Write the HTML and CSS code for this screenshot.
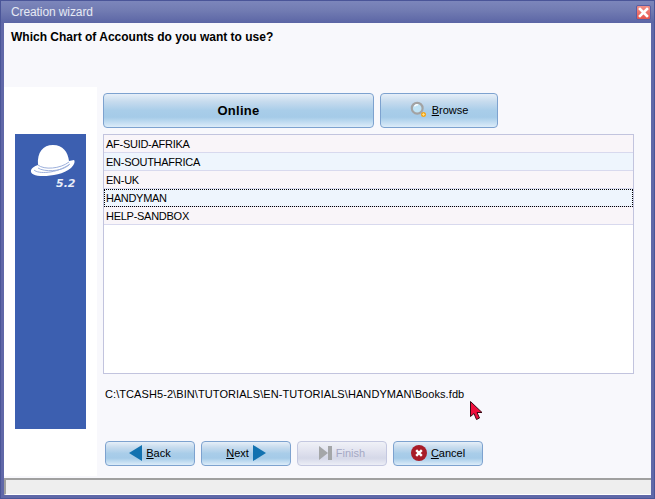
FILE: index.html
```html
<!DOCTYPE html>
<html lang="en">
<head>
<meta charset="utf-8">
<title>Creation wizard</title>
<link rel="stylesheet" href="styles.css">
</head>
<body>
<div class="window">
  <div class="titlebar">
    <span class="title">Creation wizard</span>
    <span class="close"><svg width="11" height="11" viewBox="0 0 11 11"><path d="M2 2l7 7M9 2l-7 7" stroke="#fff" stroke-width="2.6" stroke-linecap="square"/></svg></span>
  </div>
  <div class="client">
    <header class="question">Which Chart of Accounts do you want to use?</header>
    <div class="middle">
      <aside class="side">
        <div class="brand">
          <svg class="hat" width="46" height="36" viewBox="0 0 46 36">
            <path d="M8 21C7 8 13 1 23 1c10 0 15 7 16 16l5-1c1 1 1 4-3 8C34 30 22 32 13 32 5 32 0 30 1 26c1-2 3-4 7-5z" fill="#fff"/>
            <path d="M8 21c6 5 22 4 31-3M8 24c6 4 23 4 31-3M4 26c4 4 22 4 36-6" fill="none" stroke="#9db0dc" stroke-width="1"/>
          </svg>
          <span class="version">5.2</span>
        </div>
      </aside>
      <main class="content">
        <div class="top-actions">
          <button class="btn online">Online</button>
          <button class="btn browse">
            <svg width="18" height="18" viewBox="0 0 20 20"><circle cx="8" cy="8" r="6" fill="#bfe3f5" stroke="#a3a3a3" stroke-width="2.4"/><path d="M5 6c1-1.500 3-2 4-1.500" stroke="#fff" stroke-width="1.400" fill="none"/><circle cx="15" cy="15" r="2.800" fill="#f3a51d"/><path d="M15 13.500v3M13.500 15h3" stroke="#ffe58a" stroke-width="1"/></svg>
            <span><u>B</u>rowse</span>
          </button>
        </div>
        <div class="list">
          <div class="row odd">AF-SUID-AFRIKA</div>
          <div class="row even">EN-SOUTHAFRICA</div>
          <div class="row odd">EN-UK</div>
          <div class="row even focus">HANDYMAN</div>
          <div class="row odd">HELP-SANDBOX</div>
        </div>
        <div class="path">C:\TCASH5-2\BIN\TUTORIALS\EN-TUTORIALS\HANDYMAN\Books.fdb</div>
        <div class="nav">
          <button class="btn nav-btn">
            <svg width="13" height="16" viewBox="0 0 13 16"><path d="M13 0v16L0 8z" fill="#1272b0"/></svg>
            <span><u>B</u>ack</span>
          </button>
          <button class="btn nav-btn">
            <span><u>N</u>ext</span>
            <svg width="13" height="16" viewBox="0 0 13 16"><path d="M0 0v16l13-8z" fill="#1272b0"/></svg>
          </button>
          <button class="btn nav-btn disabled">
            <svg width="13" height="16" viewBox="0 0 13 16"><path d="M0 1l9 7-9 7z" fill="#a4a6a8"/><path d="M9 1h4v14H9z" fill="#a4a6a8"/></svg>
            <span>Finish</span>
          </button>
          <button class="btn nav-btn">
            <svg width="16" height="16" viewBox="0 0 16 16"><circle cx="8" cy="8" r="8" fill="#a81c28"/><path d="M5.200 5.200l5.600 5.600M10.800 5.200l-5.600 5.600" stroke="#fff" stroke-width="2.400"/></svg>
            <span><u>C</u>ancel</span>
          </button>
        </div>
      </main>
    </div>
    <footer class="status"></footer>
  </div>
  <svg class="cursor" width="14" height="19" viewBox="0 0 14 19"><path d="M.5.500v15l3.500-3 2.500 6 3-1.500-2.500-5.500h5z" fill="#ee0f3c" stroke="#3a0a14" stroke-width="1"/></svg>
</div>
</body>
</html>
```
FILE: styles.css
```css
* { box-sizing: border-box; }
html, body { margin: 0; padding: 0; }
body { width: 655px; height: 499px; overflow: hidden; font-family: "Liberation Sans", Arial, sans-serif; font-size: 11px; color: #000; }
.window { position: relative; width: 655px; height: 499px; padding: 0 3px 3px; display: flex; flex-direction: column; background: #6068a8; border: 1px solid #4a5598; }
.titlebar { height: 22px; flex: none; margin: 0 -3px; padding: 0 3px 0 10px; display: flex; align-items: center; justify-content: space-between; background: linear-gradient(#7c86bb, #717bb2 45%, #5b65a5); }
.title { color: #e6e9f4; font-size: 12px; letter-spacing: -0.1px; }
.close { width: 15px; height: 15px; display: flex; align-items: center; justify-content: center; border: 1px solid #5a5ea0; border-radius: 2px; background: linear-gradient(#f09088, #e5544e); }
.client { flex: 1; display: flex; flex-direction: column; min-height: 0; background: #f8f8fc; }
.question { height: 64px; flex: none; padding: 7px 0 0 7px; font-size: 12px; font-weight: bold; line-height: 14px; }
.middle { flex: 1; display: flex; min-height: 0; }
.side { width: 93px; flex: none; padding: 47px 0 47px 11px; background: #fff; }
.brand { position: relative; width: 71px; height: 295px; background: #3c5fb0; }
.hat { position: absolute; left: 15px; top: 10px; }
.version { position: absolute; left: 41px; top: 43px; color: #e8edf8; font-family: "DejaVu Sans", sans-serif; font-size: 11px; font-weight: bold; font-style: italic; }
.content { flex: 1; padding: 6px 17px 0 6px; display: flex; flex-direction: column; }
.top-actions { display: flex; gap: 6px; height: 35px; flex: none; }
.btn { display: flex; align-items: center; justify-content: center; gap: 4px; padding: 0 0 1px; border: 1px solid #7da2cf; border-radius: 4px; font-family: "Liberation Sans", sans-serif; font-size: 11px; color: #000; background: linear-gradient(#e6eff8 0%, #c8dcee 22%, #a9cde9 50%, #a5cbe8 70%, #dcecf9 100%); }
.online { width: 271px; font-size: 13px; font-weight: bold; letter-spacing: 0.3px; }
.browse { width: 118px; }
.list { margin-top: 6px; height: 240px; flex: none; background: #fff; border: 1px solid #c2c4de; letter-spacing: -0.27px; }
.row { height: 18px; padding: 1px 0 0 2px; line-height: 17px; border-bottom: 1px solid #d8d9ee; }
.odd { background: #f9f5f9; }
.even { background: #eef5fd; }
.focus { outline: 1px dotted #000; outline-offset: -1px; }
.path { margin: 13px 0 0 2px; height: 15px; line-height: 15px; flex: none; letter-spacing: 0.08px; }
.nav { margin: 39px 0 0 2px; display: flex; gap: 6px; }
.nav-btn { width: 90px; height: 25px; }
.disabled { color: #a4a8c4; border-color: #c4c8e0; background: linear-gradient(#f0f1f7, #dfe1ee 45%, #d5d8e8 70%, #eceef6); }
.status { height: 17px; margin-top: 2px; flex: none; background: #eeeeee; border-top: 2px solid #a0a0a0; border-left: 2px solid #a0a0a0; border-bottom: 1px solid #fff; }
.cursor { position: absolute; left: 469px; top: 400px; }
```
